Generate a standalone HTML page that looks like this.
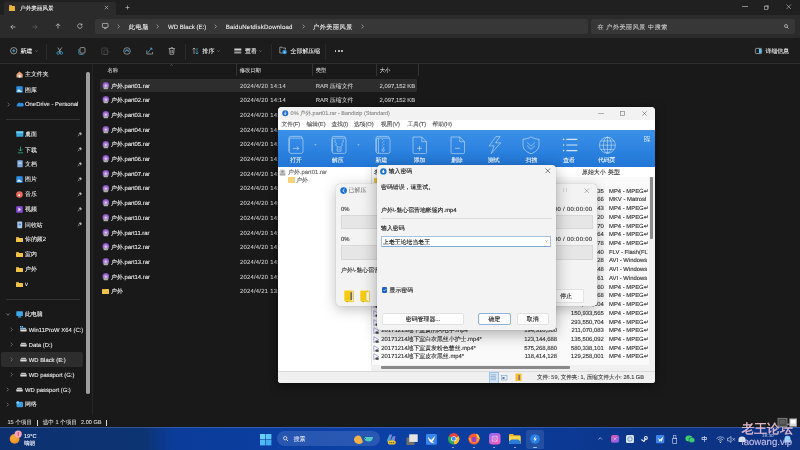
<!DOCTYPE html>
<html><head><meta charset="utf-8"><style>
html,body{margin:0;padding:0;width:800px;height:450px;overflow:hidden;background:#191919}
body{position:relative;font-family:"Liberation Sans",sans-serif;text-rendering:geometricPrecision}
.a{position:absolute}
.t{white-space:nowrap;-webkit-text-stroke-width:0.08px}
.l{-webkit-text-stroke-width:0.12px}
svg{overflow:visible}
</style></head><body>
<svg width="0" height="0" style="position:absolute"><defs><radialGradient id="rg" cx="0.5" cy="0.55" r="0.6"><stop offset="0" stop-color="#f4e8ff"/><stop offset="0.35" stop-color="#b48ae0"/><stop offset="1" stop-color="#6c3ea8"/></radialGradient><linearGradient id="pg" x1="0" y1="0" x2="1" y2="1"><stop offset="0" stop-color="#f05fb0"/><stop offset="1" stop-color="#6a5cf0"/></linearGradient></defs></svg>
<div class="a" style="left:0;top:0;width:800px;height:450px;will-change:transform;background:#191919">
<div class="a" style="left:0px;top:0px;width:800px;height:15px;background:#202020"></div>
<div class="a" style="left:4px;top:1.6px;width:111.6px;height:13.6px;background:#2b2b2b;border-radius:3px 3px 0 0"></div>
<div class="a" style="left:8.5px;top:5.5px;width:6.5px;height:5px;background:#e8b43c;border-radius:0.5px"></div>
<div class="a" style="left:8.5px;top:4.8px;width:3px;height:1.5px;background:#d9a232;border-radius:0.5px 0.5px 0 0"></div>
<div class="a t" style="left:20.1px;top:5.40px;line-height:8px;font-size:5.6px;color:#f6f6f6;">户外美丽风景</div>
<svg class="a" style="left:104px;top:5px" width="5" height="5" viewBox="0 0 5 5"><path d="M0.8 0.8L4.2 4.2M4.2 0.8L0.8 4.2" stroke="#cfcfcf" stroke-width="0.6"/></svg>
<svg class="a" style="left:124.5px;top:5px" width="5" height="5" viewBox="0 0 5 5"><path d="M2.5 0.5V4.5M0.5 2.5H4.5" stroke="#cfcfcf" stroke-width="0.6"/></svg>
<div class="a" style="left:742px;top:6.4px;width:5.8px;height:0.5px;background:#8a8a8a"></div>
<svg class="a" style="left:763.5px;top:4.5px" width="5" height="5" viewBox="0 0 5 5"><rect x="0.5" y="1.2" width="3.3" height="3.3" fill="none" stroke="#bdbdbd" stroke-width="0.6"/><path d="M1.3 0.6H4.4V3.8" fill="none" stroke="#bdbdbd" stroke-width="0.5"/></svg>
<svg class="a" style="left:786px;top:4.2px" width="5.5" height="5.5" viewBox="0 0 5.5 5.5"><path d="M0.5 0.5L5 5M5 0.5L0.5 5" stroke="#bdbdbd" stroke-width="0.6"/></svg>
<div class="a" style="left:0px;top:15px;width:800px;height:23px;background:#2b2b2b"></div>
<svg class="a" style="left:9.5px;top:23.5px" width="6" height="6" viewBox="0 0 6 6"><path d="M5.5 3H0.8M3 0.8L0.8 3L3 5.2" fill="none" stroke="#e6e6e6" stroke-width="0.6"/></svg>
<svg class="a" style="left:32px;top:23.5px" width="6" height="6" viewBox="0 0 6 6"><path d="M0.5 3H5.2M3 0.8L5.2 3L3 5.2" fill="none" stroke="#6e6e6e" stroke-width="0.6"/></svg>
<svg class="a" style="left:54.5px;top:23.3px" width="6" height="6" viewBox="0 0 6 6"><path d="M3 5.5V0.8M0.8 3L3 0.8L5.2 3" fill="none" stroke="#e6e6e6" stroke-width="0.6"/></svg>
<svg class="a" style="left:77px;top:23.3px" width="6" height="6" viewBox="0 0 6 6"><path d="M4.9 1.9A2.3 2.3 0 1 0 5.2 3.3M5 0.6V2.1H3.5" fill="none" stroke="#e6e6e6" stroke-width="0.6"/></svg>
<div class="a" style="left:94.5px;top:18.7px;width:493.5px;height:15px;background:#373737;border-radius:2.5px"></div>
<svg class="a" style="left:101.5px;top:23px" width="6.5" height="6" viewBox="0 0 6.5 6"><rect x="0.4" y="0.4" width="5.6" height="4" rx="0.4" fill="none" stroke="#e6e6e6" stroke-width="0.6"/><path d="M2 5.6H4.5" stroke="#e6e6e6" stroke-width="0.6"/></svg>
<svg class="a" style="left:116.5px;top:23.8px" width="3" height="5" viewBox="0 0 3 5"><path d="M0.8 0.6L2.4 2.5L0.8 4.4" fill="none" stroke="#d0d0d0" stroke-width="0.55"/></svg>
<div class="a t" style="left:128.7px;top:24.00px;line-height:8px;font-size:6.1px;color:#f0f0f0;letter-spacing:0.7px">此电脑</div>
<svg class="a" style="left:156.0px;top:23.8px" width="3" height="5" viewBox="0 0 3 5"><path d="M0.8 0.6L2.4 2.5L0.8 4.4" fill="none" stroke="#d0d0d0" stroke-width="0.55"/></svg>
<div class="a t" style="left:168px;top:24.00px;line-height:8px;font-size:6.1px;color:#f0f0f0;">WD Black (E:)</div>
<svg class="a" style="left:214.0px;top:23.8px" width="3" height="5" viewBox="0 0 3 5"><path d="M0.8 0.6L2.4 2.5L0.8 4.4" fill="none" stroke="#d0d0d0" stroke-width="0.55"/></svg>
<div class="a t" style="left:225.7px;top:24.00px;line-height:8px;font-size:6.1px;color:#f0f0f0;letter-spacing:0.2px">BaiduNetdiskDownload</div>
<svg class="a" style="left:301.5px;top:23.8px" width="3" height="5" viewBox="0 0 3 5"><path d="M0.8 0.6L2.4 2.5L0.8 4.4" fill="none" stroke="#d0d0d0" stroke-width="0.55"/></svg>
<div class="a t" style="left:313px;top:24.00px;line-height:8px;font-size:6.1px;color:#f0f0f0;letter-spacing:0.55px">户外美丽风景</div>
<svg class="a" style="left:361.0px;top:23.8px" width="3" height="5" viewBox="0 0 3 5"><path d="M0.8 0.6L2.4 2.5L0.8 4.4" fill="none" stroke="#d0d0d0" stroke-width="0.55"/></svg>
<div class="a" style="left:591.3px;top:18.7px;width:204px;height:15px;background:#373737;border-radius:2.5px"></div>
<div class="a t" style="left:597.5px;top:24.00px;line-height:8px;font-size:6.1px;color:#cfcfcf;letter-spacing:0.5px">在 户外美丽风景 中搜索</div>
<svg class="a" style="left:783.5px;top:23.8px" width="5" height="5" viewBox="0 0 5 5"><circle cx="2" cy="2" r="1.5" fill="none" stroke="#e0e0e0" stroke-width="0.6"/><path d="M3.1 3.1L4.5 4.5" stroke="#e0e0e0" stroke-width="0.7"/></svg>
<div class="a" style="left:0px;top:38px;width:800px;height:25px;background:#1c1c1c"></div>
<div class="a" style="left:0px;top:62.8px;width:800px;height:0.7px;background:#2e2e2e"></div>
<svg class="a" style="left:10px;top:46.8px" width="7.5" height="7.5" viewBox="0 0 7.5 7.5"><circle cx="3.75" cy="3.75" r="3.2" fill="none" stroke="#d8d8d8" stroke-width="0.6"/><path d="M3.75 2.2V5.3M2.2 3.75H5.3" stroke="#4cc2ff" stroke-width="0.7"/></svg>
<div class="a t" style="left:20.6px;top:47.60px;line-height:8px;font-size:5.9px;color:#f2f2f2;">新建</div>
<svg class="a" style="left:35.4px;top:49.6px" width="3" height="2" viewBox="0 0 3 2"><path d="M0.4 0.5L1.5 1.5L2.6 0.5" fill="none" stroke="#a0a0a0" stroke-width="0.5"/></svg>
<div class="a" style="left:46.2px;top:43.6px;width:0.6px;height:16.3px;background:#2a2a2a"></div>
<svg class="a" style="left:55.6px;top:46.5px" width="7.5" height="8" viewBox="0 0 7.5 8"><path d="M1.8 0.5L4.5 5M5.7 0.5L3 5" stroke="#d8d8d8" stroke-width="0.6"/><circle cx="2.2" cy="6" r="1.3" fill="none" stroke="#4cc2ff" stroke-width="0.6"/><circle cx="5.3" cy="6" r="1.3" fill="none" stroke="#4cc2ff" stroke-width="0.6"/></svg>
<svg class="a" style="left:78px;top:46.5px" width="7.6" height="8" viewBox="0 0 7.6 8"><rect x="2" y="0.6" width="5" height="5.5" rx="1" fill="none" stroke="#d8d8d8" stroke-width="0.6"/><path d="M0.8 2V6.2A1.2 1.2 0 0 0 2 7.4H5.5" fill="none" stroke="#4cc2ff" stroke-width="0.6"/></svg>
<svg class="a" style="left:100.6px;top:46.5px" width="7.5" height="8" viewBox="0 0 7.5 8"><rect x="0.8" y="1" width="5.5" height="6.5" rx="1" fill="none" stroke="#555" stroke-width="0.6"/><rect x="3" y="3" width="4" height="4.5" rx="0.6" fill="none" stroke="#555" stroke-width="0.6"/></svg>
<svg class="a" style="left:122.7px;top:46.5px" width="8" height="8" viewBox="0 0 8 8"><circle cx="4" cy="4" r="3.3" fill="none" stroke="#c8c8c8" stroke-width="0.6"/><path d="M2.3 5L3.3 2.6L4.1 4.2L4.9 2.6L5.8 5" fill="none" stroke="#4cc2ff" stroke-width="0.65"/></svg>
<svg class="a" style="left:145.6px;top:46.5px" width="7.5" height="8" viewBox="0 0 7.5 8"><path d="M0.8 3.5V7H6.6V5" fill="none" stroke="#c8c8c8" stroke-width="0.6"/><path d="M1.8 5.8L3.6 3.6L5.8 1.2M4 1.2H5.9V3" fill="none" stroke="#4cc2ff" stroke-width="0.65"/></svg>
<svg class="a" style="left:168px;top:46.5px" width="7.6" height="8" viewBox="0 0 7.6 8"><path d="M0.6 1.6H7M1.5 1.6L2 7.3H5.6L6.1 1.6M2.8 1.6L3.1 0.6H4.5L4.8 1.6M3 3V6M4.6 3V6" fill="none" stroke="#d8d8d8" stroke-width="0.6"/></svg>
<div class="a" style="left:184.7px;top:43.6px;width:0.6px;height:16.3px;background:#2a2a2a"></div>
<svg class="a" style="left:191.9px;top:46.5px" width="7" height="8" viewBox="0 0 7 8"><path d="M2 7V1M0.6 2.4L2 1L3.4 2.4" fill="none" stroke="#d8d8d8" stroke-width="0.6"/><path d="M5 1V7M3.6 5.6L5 7L6.4 5.6" fill="none" stroke="#4cc2ff" stroke-width="0.6"/></svg>
<div class="a t" style="left:202.5px;top:47.60px;line-height:8px;font-size:5.9px;color:#f2f2f2;">排序</div>
<svg class="a" style="left:217.3px;top:49.6px" width="3" height="2" viewBox="0 0 3 2"><path d="M0.4 0.5L1.5 1.5L2.6 0.5" fill="none" stroke="#a0a0a0" stroke-width="0.5"/></svg>
<svg class="a" style="left:233.7px;top:47.5px" width="7.5" height="6" viewBox="0 0 7.5 6"><rect x="0.3" y="0.5" width="7" height="2" fill="#cfcfcf"/><rect x="0.3" y="3.5" width="7" height="2" fill="#9a9a9a"/></svg>
<div class="a t" style="left:245px;top:47.60px;line-height:8px;font-size:5.9px;color:#f2f2f2;">查看</div>
<svg class="a" style="left:259.1px;top:49.6px" width="3" height="2" viewBox="0 0 3 2"><path d="M0.4 0.5L1.5 1.5L2.6 0.5" fill="none" stroke="#a0a0a0" stroke-width="0.5"/></svg>
<div class="a" style="left:270.5px;top:43.6px;width:0.6px;height:16.3px;background:#2a2a2a"></div>
<svg class="a" style="left:278.7px;top:46.3px" width="8.5" height="8.5" viewBox="0 0 8.5 8.5"><path d="M0.8 1.2H3L3.8 2H6.5V3.5M0.8 1.2V7H3.5" fill="none" stroke="#d8d8d8" stroke-width="0.6"/><circle cx="5.6" cy="6" r="2.3" fill="#2b8fd8"/><path d="M5.6 4.9V7M4.7 6.2L5.6 7.1L6.5 6.2" fill="none" stroke="#fff" stroke-width="0.45"/></svg>
<div class="a t" style="left:290.6px;top:47.60px;line-height:8px;font-size:5.9px;color:#f2f2f2;">全部解压缩</div>
<div class="a" style="left:325.2px;top:43.6px;width:0.6px;height:16.3px;background:#2a2a2a"></div>
<div class="a" style="left:334.6px;top:50px;width:1.5px;height:1.5px;background:#e0e0e0;border-radius:1px"></div>
<div class="a" style="left:338.0px;top:50px;width:1.5px;height:1.5px;background:#e0e0e0;border-radius:1px"></div>
<div class="a" style="left:341.40000000000003px;top:50px;width:1.5px;height:1.5px;background:#e0e0e0;border-radius:1px"></div>
<svg class="a" style="left:755px;top:47.5px" width="7" height="6" viewBox="0 0 7 6"><rect x="0.4" y="0.4" width="6.2" height="5.2" rx="1" fill="none" stroke="#d8d8d8" stroke-width="0.6"/><rect x="4" y="0.8" width="2.3" height="4.4" fill="#4cc2ff"/></svg>
<div class="a t" style="left:765.5px;top:47.60px;line-height:8px;font-size:5.9px;color:#f2f2f2;">详细信息</div>
<svg class="a" style="left:16px;top:71px" width="7.2" height="7" viewBox="0 0 7.2 7"><path d="M0.5 3.3L3.6 0.5L6.7 3.3V6.6H0.5Z" fill="#f0a37a"/><rect x="2.6" y="4" width="2" height="2.6" fill="#fff"/></svg>
<div class="a t" style="left:25px;top:71.40px;line-height:8px;font-size:5.9px;color:#efefef;">主文件夹</div>
<svg class="a" style="left:16px;top:86.3px" width="7" height="7" viewBox="0 0 7 7"><rect x="0.3" y="0.3" width="6.4" height="6.4" rx="0.6" fill="#2d8ee6"/><path d="M0.5 5.6L2.8 3.3L6.5 6Z" fill="#e8f4ff"/></svg>
<div class="a t" style="left:25px;top:86.60px;line-height:8px;font-size:5.9px;color:#efefef;">图库</div>
<svg class="a" style="left:6.5px;top:101.9px" width="3" height="5" viewBox="0 0 3 5"><path d="M0.8 0.6L2.4 2.5L0.8 4.4" fill="none" stroke="#9a9a9a" stroke-width="0.55"/></svg>
<svg class="a" style="left:15.5px;top:101.8px" width="8" height="5" viewBox="0 0 8 5"><path d="M1.5 4.6A1.3 1.3 0 0 1 1.4 2.2A2 2 0 0 1 4.8 1.2A1.6 1.6 0 0 1 6.8 4.6Z" fill="#2f8fe0"/></svg>
<div class="a t" style="left:25px;top:101.40px;line-height:8px;font-size:5.9px;color:#efefef;">OneDrive - Personal</div>
<div class="a" style="left:5.6px;top:119.3px;width:74.5px;height:0.6px;background:#333"></div>
<svg class="a" style="left:16.2px;top:131px" width="7.5" height="6" viewBox="0 0 7.5 6"><rect x="0.3" y="0.3" width="7" height="5.4" rx="0.5" fill="#38a8d8"/><rect x="0.3" y="0.3" width="7" height="2" fill="#6cc8ee"/></svg>
<div class="a t" style="left:25px;top:131.00px;line-height:8px;font-size:5.9px;color:#efefef;">桌面</div>
<svg class="a" style="left:77.0px;top:131.5px" width="5" height="5" viewBox="0 0 5 5"><path d="M0.6 4.4L2 3M1.3 1.9L3.1 3.7M2.1 1.2L3.8 2.9L4.5 1.6L3.4 0.5Z" fill="#bdbdbd" stroke="#bdbdbd" stroke-width="0.5"/></svg>
<svg class="a" style="left:16.5px;top:145.8px" width="7" height="7.5" viewBox="0 0 7 7.5"><path d="M3.5 0.5V5M1.6 3.2L3.5 5.1L5.4 3.2M0.8 6.8H6.2" fill="none" stroke="#3bc08a" stroke-width="0.7"/></svg>
<div class="a t" style="left:25px;top:146.50px;line-height:8px;font-size:5.9px;color:#efefef;">下载</div>
<svg class="a" style="left:77.0px;top:147.0px" width="5" height="5" viewBox="0 0 5 5"><path d="M0.6 4.4L2 3M1.3 1.9L3.1 3.7M2.1 1.2L3.8 2.9L4.5 1.6L3.4 0.5Z" fill="#bdbdbd" stroke="#bdbdbd" stroke-width="0.5"/></svg>
<svg class="a" style="left:16.8px;top:160.2px" width="6" height="7.5" viewBox="0 0 6 7.5"><rect x="0.3" y="0.3" width="5.4" height="6.9" rx="0.5" fill="#7fa6d8"/><rect x="1.2" y="2" width="3.4" height="0.5" fill="#e0ecff"/><rect x="1.2" y="3.5" width="3.4" height="0.5" fill="#e0ecff"/></svg>
<div class="a t" style="left:25px;top:161.00px;line-height:8px;font-size:5.9px;color:#efefef;">文档</div>
<svg class="a" style="left:77.0px;top:161.5px" width="5" height="5" viewBox="0 0 5 5"><path d="M0.6 4.4L2 3M1.3 1.9L3.1 3.7M2.1 1.2L3.8 2.9L4.5 1.6L3.4 0.5Z" fill="#bdbdbd" stroke="#bdbdbd" stroke-width="0.5"/></svg>
<svg class="a" style="left:16px;top:175.5px" width="7" height="7" viewBox="0 0 7 7"><rect x="0.3" y="0.3" width="6.4" height="6.4" rx="0.6" fill="#2d8ee6"/><path d="M0.5 5.6L2.8 3.3L6.5 6Z" fill="#e8f4ff"/></svg>
<div class="a t" style="left:25px;top:176.00px;line-height:8px;font-size:5.9px;color:#efefef;">图片</div>
<svg class="a" style="left:77.0px;top:176.5px" width="5" height="5" viewBox="0 0 5 5"><path d="M0.6 4.4L2 3M1.3 1.9L3.1 3.7M2.1 1.2L3.8 2.9L4.5 1.6L3.4 0.5Z" fill="#bdbdbd" stroke="#bdbdbd" stroke-width="0.5"/></svg>
<svg class="a" style="left:16px;top:190.5px" width="7" height="7" viewBox="0 0 7 7"><circle cx="3.5" cy="3.5" r="3.3" fill="#e8675a"/><circle cx="3.2" cy="4.2" r="1" fill="#fff"/></svg>
<div class="a t" style="left:25px;top:191.00px;line-height:8px;font-size:5.9px;color:#efefef;">音乐</div>
<svg class="a" style="left:77.0px;top:191.5px" width="5" height="5" viewBox="0 0 5 5"><path d="M0.6 4.4L2 3M1.3 1.9L3.1 3.7M2.1 1.2L3.8 2.9L4.5 1.6L3.4 0.5Z" fill="#bdbdbd" stroke="#bdbdbd" stroke-width="0.5"/></svg>
<svg class="a" style="left:16.2px;top:205.5px" width="7" height="7" viewBox="0 0 7 7"><rect x="0.3" y="0.3" width="6.4" height="6.4" rx="0.6" fill="#8a4fd8"/><path d="M2.5 1.8L5 3.5L2.5 5.2Z" fill="#fff"/></svg>
<div class="a t" style="left:25px;top:206.00px;line-height:8px;font-size:5.9px;color:#efefef;">视频</div>
<svg class="a" style="left:77.0px;top:206.5px" width="5" height="5" viewBox="0 0 5 5"><path d="M0.6 4.4L2 3M1.3 1.9L3.1 3.7M2.1 1.2L3.8 2.9L4.5 1.6L3.4 0.5Z" fill="#bdbdbd" stroke="#bdbdbd" stroke-width="0.5"/></svg>
<svg class="a" style="left:17px;top:221px" width="5.5" height="7.5" viewBox="0 0 5.5 7.5"><rect x="0.3" y="0.6" width="4.9" height="6.6" rx="0.6" fill="#a9c6e6"/><circle cx="2.75" cy="3.5" r="1.1" fill="#3f7fd0"/></svg>
<div class="a t" style="left:25px;top:221.80px;line-height:8px;font-size:5.9px;color:#efefef;">回收站</div>
<svg class="a" style="left:77.0px;top:222.3px" width="5" height="5" viewBox="0 0 5 5"><path d="M0.6 4.4L2 3M1.3 1.9L3.1 3.7M2.1 1.2L3.8 2.9L4.5 1.6L3.4 0.5Z" fill="#bdbdbd" stroke="#bdbdbd" stroke-width="0.5"/></svg>
<div class="a" style="left:16px;top:237.55px;width:7px;height:4.6px;background:#f0c34a;border-radius:0.6px"></div>
<div class="a" style="left:16px;top:236.65px;width:3.15px;height:1.5px;background:#dca93a;border-radius:0.5px 0.5px 0 0"></div>
<div class="a t" style="left:25px;top:236.40px;line-height:8px;font-size:5.9px;color:#efefef;">你的频2</div>
<div class="a" style="left:16px;top:252.55px;width:7px;height:4.6px;background:#f0c34a;border-radius:0.6px"></div>
<div class="a" style="left:16px;top:251.65px;width:3.15px;height:1.5px;background:#dca93a;border-radius:0.5px 0.5px 0 0"></div>
<div class="a t" style="left:25px;top:251.40px;line-height:8px;font-size:5.9px;color:#efefef;">室内</div>
<div class="a" style="left:16px;top:267.54999999999995px;width:7px;height:4.6px;background:#f0c34a;border-radius:0.6px"></div>
<div class="a" style="left:16px;top:266.65px;width:3.15px;height:1.5px;background:#dca93a;border-radius:0.5px 0.5px 0 0"></div>
<div class="a t" style="left:25px;top:266.40px;line-height:8px;font-size:5.9px;color:#efefef;">户外</div>
<div class="a" style="left:16px;top:282.54999999999995px;width:7px;height:4.6px;background:#f0c34a;border-radius:0.6px"></div>
<div class="a" style="left:16px;top:281.65px;width:3.15px;height:1.5px;background:#dca93a;border-radius:0.5px 0.5px 0 0"></div>
<div class="a t" style="left:25px;top:281.40px;line-height:8px;font-size:5.9px;color:#efefef;">v</div>
<div class="a" style="left:5.6px;top:299.1px;width:74.5px;height:0.6px;background:#333"></div>
<svg class="a" style="left:5.8px;top:313px" width="4" height="3" viewBox="0 0 4 3"><path d="M0.3 0.6L2 2.2L3.7 0.6" fill="none" stroke="#b8b8b8" stroke-width="0.6"/></svg>
<svg class="a" style="left:16px;top:310.8px" width="7.2" height="7" viewBox="0 0 7.2 7"><rect x="0.3" y="0.3" width="6.6" height="4.8" rx="0.6" fill="#3fa7e8"/><path d="M2.2 5.2H5L5.5 6.6H1.7Z" fill="#3fa7e8"/></svg>
<div class="a t" style="left:25px;top:311.40px;line-height:8px;font-size:5.9px;color:#efefef;">此电脑</div>
<svg class="a" style="left:10.4px;top:327.2px" width="3" height="5" viewBox="0 0 3 5"><path d="M0.8 0.6L2.4 2.5L0.8 4.4" fill="none" stroke="#9a9a9a" stroke-width="0.55"/></svg>
<svg class="a" style="left:20px;top:327.2px" width="7" height="5" viewBox="0 0 7 5"><path d="M0.4 2.4L1.4 0.7H5.6L6.6 2.4Z" fill="#bfbfbf"/><rect x="0.3" y="2.2" width="6.4" height="2.4" rx="0.6" fill="#dcdcdc"/><rect x="0.6" y="2" width="5.8" height="0.45" fill="#5a5a5a"/></svg>
<svg class="a" style="left:20px;top:326.2px" width="3.2" height="3.2" viewBox="0 0 3.2 3.2"><rect x="0" y="0" width="1.4" height="1.4" fill="#4fb4f0"/><rect x="1.7" y="0" width="1.4" height="1.4" fill="#4fb4f0"/><rect x="0" y="1.7" width="1.4" height="1.4" fill="#4fb4f0"/><rect x="1.7" y="1.7" width="1.4" height="1.4" fill="#4fb4f0"/></svg>
<div class="a t" style="left:28.7px;top:326.70px;line-height:8px;font-size:5.9px;color:#efefef;">Win11ProW X64 (C:)</div>
<svg class="a" style="left:10.4px;top:342.0px" width="3" height="5" viewBox="0 0 3 5"><path d="M0.8 0.6L2.4 2.5L0.8 4.4" fill="none" stroke="#9a9a9a" stroke-width="0.55"/></svg>
<svg class="a" style="left:20px;top:342.0px" width="7" height="5" viewBox="0 0 7 5"><path d="M0.4 2.4L1.4 0.7H5.6L6.6 2.4Z" fill="#bfbfbf"/><rect x="0.3" y="2.2" width="6.4" height="2.4" rx="0.6" fill="#dcdcdc"/><rect x="0.6" y="2" width="5.8" height="0.45" fill="#5a5a5a"/></svg>
<div class="a t" style="left:28.7px;top:341.50px;line-height:8px;font-size:5.9px;color:#efefef;">Data (D:)</div>
<div class="a" style="left:1.3px;top:352px;width:81.7px;height:14.6px;background:#2d2d2d;border-radius:2px"></div>
<svg class="a" style="left:10.4px;top:357.0px" width="3" height="5" viewBox="0 0 3 5"><path d="M0.8 0.6L2.4 2.5L0.8 4.4" fill="none" stroke="#9a9a9a" stroke-width="0.55"/></svg>
<svg class="a" style="left:20px;top:357.0px" width="7" height="5" viewBox="0 0 7 5"><path d="M0.4 2.4L1.4 0.7H5.6L6.6 2.4Z" fill="#bfbfbf"/><rect x="0.3" y="2.2" width="6.4" height="2.4" rx="0.6" fill="#dcdcdc"/><rect x="0.6" y="2" width="5.8" height="0.45" fill="#5a5a5a"/></svg>
<div class="a t" style="left:28.7px;top:356.50px;line-height:8px;font-size:5.9px;color:#efefef;">WD Black (E:)</div>
<svg class="a" style="left:10.4px;top:372.0px" width="3" height="5" viewBox="0 0 3 5"><path d="M0.8 0.6L2.4 2.5L0.8 4.4" fill="none" stroke="#9a9a9a" stroke-width="0.55"/></svg>
<svg class="a" style="left:20px;top:372.0px" width="7" height="5" viewBox="0 0 7 5"><path d="M0.4 2.4L1.4 0.7H5.6L6.6 2.4Z" fill="#bfbfbf"/><rect x="0.3" y="2.2" width="6.4" height="2.4" rx="0.6" fill="#dcdcdc"/><rect x="0.6" y="2" width="5.8" height="0.45" fill="#5a5a5a"/></svg>
<div class="a t" style="left:28.7px;top:371.50px;line-height:8px;font-size:5.9px;color:#efefef;">WD passport (G:)</div>
<svg class="a" style="left:6.3px;top:387.0px" width="3" height="5" viewBox="0 0 3 5"><path d="M0.8 0.6L2.4 2.5L0.8 4.4" fill="none" stroke="#9a9a9a" stroke-width="0.55"/></svg>
<svg class="a" style="left:16.3px;top:387.0px" width="7" height="5" viewBox="0 0 7 5"><path d="M0.4 2.4L1.4 0.7H5.6L6.6 2.4Z" fill="#bfbfbf"/><rect x="0.3" y="2.2" width="6.4" height="2.4" rx="0.6" fill="#dcdcdc"/><rect x="0.6" y="2" width="5.8" height="0.45" fill="#5a5a5a"/></svg>
<div class="a t" style="left:25px;top:386.50px;line-height:8px;font-size:5.9px;color:#efefef;">WD passport (G:)</div>
<svg class="a" style="left:6.3px;top:401.9px" width="3" height="5" viewBox="0 0 3 5"><path d="M0.8 0.6L2.4 2.5L0.8 4.4" fill="none" stroke="#9a9a9a" stroke-width="0.55"/></svg>
<svg class="a" style="left:16px;top:400.8px" width="7.5" height="7" viewBox="0 0 7.5 7"><rect x="0.5" y="0.8" width="6.5" height="5.5" rx="1.2" fill="#3aa0e0"/><circle cx="1.8" cy="1.6" r="1.4" fill="#7fd0ff"/></svg>
<div class="a t" style="left:25px;top:401.40px;line-height:8px;font-size:5.9px;color:#efefef;">网络</div>
<div class="a" style="left:86.3px;top:72px;width:3.4px;height:322px;background:#9e9e9e;border-radius:1.7px"></div>
<div class="a" style="left:92.4px;top:64px;width:0.6px;height:351px;background:#262626"></div>
<div class="a t" style="left:107.5px;top:67.40px;line-height:8px;font-size:5.3px;color:#cfcfcf;">名称</div>
<svg class="a" style="left:169.5px;top:63.8px" width="3" height="2" viewBox="0 0 3 2"><path d="M0.4 1.6L1.5 0.5L2.6 1.6" fill="none" stroke="#9a9a9a" stroke-width="0.45"/></svg>
<div class="a" style="left:236.4px;top:63.5px;width:0.6px;height:12.3px;background:#333"></div>
<div class="a" style="left:312.3px;top:63.5px;width:0.6px;height:12.3px;background:#333"></div>
<div class="a" style="left:376.4px;top:63.5px;width:0.6px;height:12.3px;background:#333"></div>
<div class="a" style="left:418.4px;top:63.5px;width:0.6px;height:12.3px;background:#333"></div>
<div class="a t" style="left:239.7px;top:67.40px;line-height:8px;font-size:5.3px;color:#cfcfcf;">修改日期</div>
<div class="a t" style="left:315.8px;top:67.40px;line-height:8px;font-size:5.3px;color:#cfcfcf;">类型</div>
<div class="a t" style="left:379.7px;top:67.40px;line-height:8px;font-size:5.3px;color:#cfcfcf;">大小</div>
<div class="a" style="left:100px;top:79.2px;width:316.5px;height:12.6px;background:#2d2d2d;border-radius:2px"></div>
<svg class="a" style="left:101.9px;top:81.8px" width="7.6" height="7.6" viewBox="0 0 7.6 7.6"><circle cx="3.8" cy="3.4" r="3.3" fill="url(#rg)"/><rect x="1.5" y="5" width="4.6" height="2.2" rx="0.4" fill="#8e8e8e"/><path d="M2 5.8H5.6M2 6.6H5.6" stroke="#e8e8e8" stroke-width="0.35"/></svg>
<div class="a t" style="left:111px;top:82.60px;line-height:8px;font-size:5.9px;color:#f0f0f0;">户外.part01.rar</div>
<div class="a t" style="left:239.9px;top:82.60px;line-height:8px;font-size:5.9px;color:#cdcdcd;letter-spacing:0.24px">2024/4/20 14:14</div>
<div class="a t" style="left:315.8px;top:82.60px;line-height:8px;font-size:5.9px;color:#d0d0d0;">RAR 压缩文件</div>
<div class="a t" style="right:384.8px;top:82.60px;line-height:8px;font-size:5.9px;color:#d0d0d0;text-align:right;">2,097,152 KB</div>
<svg class="a" style="left:101.9px;top:96.49px" width="7.6" height="7.6" viewBox="0 0 7.6 7.6"><circle cx="3.8" cy="3.4" r="3.3" fill="url(#rg)"/><rect x="1.5" y="5" width="4.6" height="2.2" rx="0.4" fill="#8e8e8e"/><path d="M2 5.8H5.6M2 6.6H5.6" stroke="#e8e8e8" stroke-width="0.35"/></svg>
<div class="a t" style="left:111px;top:97.29px;line-height:8px;font-size:5.9px;color:#f0f0f0;">户外.part02.rar</div>
<div class="a t" style="left:239.9px;top:97.29px;line-height:8px;font-size:5.9px;color:#cdcdcd;letter-spacing:0.24px">2024/4/20 14:14</div>
<div class="a t" style="left:315.8px;top:97.29px;line-height:8px;font-size:5.9px;color:#d0d0d0;">RAR 压缩文件</div>
<div class="a t" style="right:384.8px;top:97.29px;line-height:8px;font-size:5.9px;color:#d0d0d0;text-align:right;">2,097,152 KB</div>
<svg class="a" style="left:101.9px;top:111.17999999999999px" width="7.6" height="7.6" viewBox="0 0 7.6 7.6"><circle cx="3.8" cy="3.4" r="3.3" fill="url(#rg)"/><rect x="1.5" y="5" width="4.6" height="2.2" rx="0.4" fill="#8e8e8e"/><path d="M2 5.8H5.6M2 6.6H5.6" stroke="#e8e8e8" stroke-width="0.35"/></svg>
<div class="a t" style="left:111px;top:111.98px;line-height:8px;font-size:5.9px;color:#f0f0f0;">户外.part03.rar</div>
<div class="a t" style="left:239.9px;top:111.98px;line-height:8px;font-size:5.9px;color:#cdcdcd;letter-spacing:0.24px">2024/4/20 14:14</div>
<svg class="a" style="left:101.9px;top:125.86999999999999px" width="7.6" height="7.6" viewBox="0 0 7.6 7.6"><circle cx="3.8" cy="3.4" r="3.3" fill="url(#rg)"/><rect x="1.5" y="5" width="4.6" height="2.2" rx="0.4" fill="#8e8e8e"/><path d="M2 5.8H5.6M2 6.6H5.6" stroke="#e8e8e8" stroke-width="0.35"/></svg>
<div class="a t" style="left:111px;top:126.67px;line-height:8px;font-size:5.9px;color:#f0f0f0;">户外.part04.rar</div>
<div class="a t" style="left:239.9px;top:126.67px;line-height:8px;font-size:5.9px;color:#cdcdcd;letter-spacing:0.24px">2024/4/20 14:14</div>
<svg class="a" style="left:101.9px;top:140.55999999999997px" width="7.6" height="7.6" viewBox="0 0 7.6 7.6"><circle cx="3.8" cy="3.4" r="3.3" fill="url(#rg)"/><rect x="1.5" y="5" width="4.6" height="2.2" rx="0.4" fill="#8e8e8e"/><path d="M2 5.8H5.6M2 6.6H5.6" stroke="#e8e8e8" stroke-width="0.35"/></svg>
<div class="a t" style="left:111px;top:141.36px;line-height:8px;font-size:5.9px;color:#f0f0f0;">户外.part05.rar</div>
<div class="a t" style="left:239.9px;top:141.36px;line-height:8px;font-size:5.9px;color:#cdcdcd;letter-spacing:0.24px">2024/4/20 14:14</div>
<svg class="a" style="left:101.9px;top:155.25px" width="7.6" height="7.6" viewBox="0 0 7.6 7.6"><circle cx="3.8" cy="3.4" r="3.3" fill="url(#rg)"/><rect x="1.5" y="5" width="4.6" height="2.2" rx="0.4" fill="#8e8e8e"/><path d="M2 5.8H5.6M2 6.6H5.6" stroke="#e8e8e8" stroke-width="0.35"/></svg>
<div class="a t" style="left:111px;top:156.05px;line-height:8px;font-size:5.9px;color:#f0f0f0;">户外.part06.rar</div>
<div class="a t" style="left:239.9px;top:156.05px;line-height:8px;font-size:5.9px;color:#cdcdcd;letter-spacing:0.24px">2024/4/20 14:14</div>
<svg class="a" style="left:101.9px;top:169.94px" width="7.6" height="7.6" viewBox="0 0 7.6 7.6"><circle cx="3.8" cy="3.4" r="3.3" fill="url(#rg)"/><rect x="1.5" y="5" width="4.6" height="2.2" rx="0.4" fill="#8e8e8e"/><path d="M2 5.8H5.6M2 6.6H5.6" stroke="#e8e8e8" stroke-width="0.35"/></svg>
<div class="a t" style="left:111px;top:170.74px;line-height:8px;font-size:5.9px;color:#f0f0f0;">户外.part07.rar</div>
<div class="a t" style="left:239.9px;top:170.74px;line-height:8px;font-size:5.9px;color:#cdcdcd;letter-spacing:0.24px">2024/4/20 14:14</div>
<svg class="a" style="left:101.9px;top:184.63px" width="7.6" height="7.6" viewBox="0 0 7.6 7.6"><circle cx="3.8" cy="3.4" r="3.3" fill="url(#rg)"/><rect x="1.5" y="5" width="4.6" height="2.2" rx="0.4" fill="#8e8e8e"/><path d="M2 5.8H5.6M2 6.6H5.6" stroke="#e8e8e8" stroke-width="0.35"/></svg>
<div class="a t" style="left:111px;top:185.43px;line-height:8px;font-size:5.9px;color:#f0f0f0;">户外.part08.rar</div>
<div class="a t" style="left:239.9px;top:185.43px;line-height:8px;font-size:5.9px;color:#cdcdcd;letter-spacing:0.24px">2024/4/20 14:14</div>
<svg class="a" style="left:101.9px;top:199.32px" width="7.6" height="7.6" viewBox="0 0 7.6 7.6"><circle cx="3.8" cy="3.4" r="3.3" fill="url(#rg)"/><rect x="1.5" y="5" width="4.6" height="2.2" rx="0.4" fill="#8e8e8e"/><path d="M2 5.8H5.6M2 6.6H5.6" stroke="#e8e8e8" stroke-width="0.35"/></svg>
<div class="a t" style="left:111px;top:200.12px;line-height:8px;font-size:5.9px;color:#f0f0f0;">户外.part09.rar</div>
<div class="a t" style="left:239.9px;top:200.12px;line-height:8px;font-size:5.9px;color:#cdcdcd;letter-spacing:0.24px">2024/4/20 14:14</div>
<svg class="a" style="left:101.9px;top:214.01px" width="7.6" height="7.6" viewBox="0 0 7.6 7.6"><circle cx="3.8" cy="3.4" r="3.3" fill="url(#rg)"/><rect x="1.5" y="5" width="4.6" height="2.2" rx="0.4" fill="#8e8e8e"/><path d="M2 5.8H5.6M2 6.6H5.6" stroke="#e8e8e8" stroke-width="0.35"/></svg>
<div class="a t" style="left:111px;top:214.81px;line-height:8px;font-size:5.9px;color:#f0f0f0;">户外.part10.rar</div>
<div class="a t" style="left:239.9px;top:214.81px;line-height:8px;font-size:5.9px;color:#cdcdcd;letter-spacing:0.24px">2024/4/20 14:14</div>
<svg class="a" style="left:101.9px;top:228.7px" width="7.6" height="7.6" viewBox="0 0 7.6 7.6"><circle cx="3.8" cy="3.4" r="3.3" fill="url(#rg)"/><rect x="1.5" y="5" width="4.6" height="2.2" rx="0.4" fill="#8e8e8e"/><path d="M2 5.8H5.6M2 6.6H5.6" stroke="#e8e8e8" stroke-width="0.35"/></svg>
<div class="a t" style="left:111px;top:229.50px;line-height:8px;font-size:5.9px;color:#f0f0f0;">户外.part11.rar</div>
<div class="a t" style="left:239.9px;top:229.50px;line-height:8px;font-size:5.9px;color:#cdcdcd;letter-spacing:0.24px">2024/4/20 14:14</div>
<svg class="a" style="left:101.9px;top:243.39px" width="7.6" height="7.6" viewBox="0 0 7.6 7.6"><circle cx="3.8" cy="3.4" r="3.3" fill="url(#rg)"/><rect x="1.5" y="5" width="4.6" height="2.2" rx="0.4" fill="#8e8e8e"/><path d="M2 5.8H5.6M2 6.6H5.6" stroke="#e8e8e8" stroke-width="0.35"/></svg>
<div class="a t" style="left:111px;top:244.19px;line-height:8px;font-size:5.9px;color:#f0f0f0;">户外.part12.rar</div>
<div class="a t" style="left:239.9px;top:244.19px;line-height:8px;font-size:5.9px;color:#cdcdcd;letter-spacing:0.24px">2024/4/20 14:14</div>
<svg class="a" style="left:101.9px;top:258.08px" width="7.6" height="7.6" viewBox="0 0 7.6 7.6"><circle cx="3.8" cy="3.4" r="3.3" fill="url(#rg)"/><rect x="1.5" y="5" width="4.6" height="2.2" rx="0.4" fill="#8e8e8e"/><path d="M2 5.8H5.6M2 6.6H5.6" stroke="#e8e8e8" stroke-width="0.35"/></svg>
<div class="a t" style="left:111px;top:258.88px;line-height:8px;font-size:5.9px;color:#f0f0f0;">户外.part13.rar</div>
<div class="a t" style="left:239.9px;top:258.88px;line-height:8px;font-size:5.9px;color:#cdcdcd;letter-spacing:0.24px">2024/4/20 14:14</div>
<svg class="a" style="left:101.9px;top:272.77px" width="7.6" height="7.6" viewBox="0 0 7.6 7.6"><circle cx="3.8" cy="3.4" r="3.3" fill="url(#rg)"/><rect x="1.5" y="5" width="4.6" height="2.2" rx="0.4" fill="#8e8e8e"/><path d="M2 5.8H5.6M2 6.6H5.6" stroke="#e8e8e8" stroke-width="0.35"/></svg>
<div class="a t" style="left:111px;top:273.57px;line-height:8px;font-size:5.9px;color:#f0f0f0;">户外.part14.rar</div>
<div class="a t" style="left:239.9px;top:273.57px;line-height:8px;font-size:5.9px;color:#cdcdcd;letter-spacing:0.24px">2024/4/20 14:14</div>
<div class="a" style="left:102px;top:289.40999999999997px;width:7px;height:4.6px;background:#f0c34a;border-radius:0.6px"></div>
<div class="a" style="left:102px;top:288.51px;width:3.15px;height:1.5px;background:#dca93a;border-radius:0.5px 0.5px 0 0"></div>
<div class="a t" style="left:111px;top:288.26px;line-height:8px;font-size:5.9px;color:#f0f0f0;">户外</div>
<div class="a t" style="left:239.9px;top:288.26px;line-height:8px;font-size:5.9px;color:#cdcdcd;letter-spacing:0.24px">2024/4/21 13:30</div>
<div class="a t" style="left:7.5px;top:419.30px;line-height:8px;font-size:5.6px;color:#d8d8d8;">15 个项目</div>
<div class="a" style="left:36.9px;top:420px;width:0.6px;height:5.5px;background:#d8d8d8"></div>
<div class="a t" style="left:42.7px;top:419.30px;line-height:8px;font-size:5.6px;color:#d8d8d8;">选中 1 个项目</div>
<div class="a t" style="left:81px;top:419.30px;line-height:8px;font-size:5.6px;color:#d8d8d8;">2.00 GB</div>
<div class="a" style="left:106.1px;top:420px;width:0.6px;height:5.5px;background:#d8d8d8"></div>
<div class="a" style="left:0px;top:427.3px;width:800px;height:22.7px;background:linear-gradient(90deg,#0d3170 0%,#0d3472 18%,#0b3c9a 21.5%,#0b40a5 45%,#0b3d9e 62%,#0c3588 80%,#0e3180 100%)"></div>
<div class="a" style="left:0px;top:427.3px;width:800px;height:0.7px;background:rgba(90,120,190,0.5)"></div>
<svg class="a" style="left:9px;top:430px" width="14" height="15" viewBox="0 0 14 15"><circle cx="5.6" cy="8.9" r="4.9" fill="#f0922a"/><circle cx="5" cy="8.2" r="3.5" fill="#f6ac3c" opacity="0.7"/><circle cx="9.2" cy="4.1" r="3.6" fill="#f4a6bc"/><path d="M9.2 2.2V5.8" stroke="#c4233c" stroke-width="0.8"/></svg>
<div class="a t" style="left:24px;top:432.50px;line-height:8px;font-size:5.6px;color:#eef2fb;">19°C</div>
<div class="a t" style="left:24px;top:439.50px;line-height:8px;font-size:5.6px;color:#eef2fb;">晴朗</div>
<svg class="a" style="left:259.5px;top:433.7px" width="11.4" height="11.4" viewBox="0 0 11.4 11.4"><rect x="0" y="0" width="5.4" height="5.4" fill="#6ad0ff"/><rect x="6" y="0" width="5.4" height="5.4" fill="#5cc4fb"/><rect x="0" y="6" width="5.4" height="5.4" fill="#52b8f6"/><rect x="6" y="6" width="5.4" height="5.4" fill="#45aef2"/></svg>
<div class="a" style="left:277px;top:431px;width:102.5px;height:15px;background:rgba(120,150,220,0.28);border-radius:7.5px"></div>
<svg class="a" style="left:282.5px;top:436px" width="5.5" height="5.5" viewBox="0 0 5.5 5.5"><circle cx="2.2" cy="2.2" r="1.7" fill="none" stroke="#fff" stroke-width="0.7"/><path d="M3.4 3.4L5 5" stroke="#fff" stroke-width="0.8"/></svg>
<div class="a t" style="left:293.7px;top:435.60px;line-height:8px;font-size:5.9px;color:#dfe6f7;">搜索</div>
<svg class="a" style="left:353px;top:433.5px" width="22" height="10" viewBox="0 0 22 10"><path d="M1 5A4 4 0 0 1 8 3L10 8A5 5 0 0 1 1 5Z" fill="#f2b248"/><path d="M11 3H20A4.5 4.5 0 0 1 11 3Z" fill="#4fc9c0"/><path d="M10 2L13 5" stroke="#1b4f9a" stroke-width="0.8"/></svg>
<svg class="a" style="left:385.8px;top:434px" width="11" height="11" viewBox="0 0 11 11"><defs><linearGradient id="cg" x1="0" y1="0" x2="1" y2="0.3"><stop offset="0" stop-color="#f0c030"/><stop offset="0.3" stop-color="#40c070"/><stop offset="0.55" stop-color="#3aa0f0"/><stop offset="1" stop-color="#e050c0"/></linearGradient></defs><path d="M0.6 7.4L3.4 0.6H6.2L4 7.4Z" fill="url(#cg)"/><path d="M4.6 7.4L6.8 2.2H9.6L8.4 7.4Z" fill="url(#cg)"/><rect x="1.8" y="6.6" width="8" height="4" rx="1.8" fill="#f2c438"/><rect x="3.4" y="8.2" width="1" height="1" fill="#3a3020"/><rect x="5.3" y="8.2" width="1" height="1" fill="#3a3020"/><rect x="7.2" y="8.2" width="1" height="1" fill="#3a3020"/></svg>
<svg class="a" style="left:405.5px;top:433.5px" width="12" height="11.5" viewBox="0 0 12 11.5"><rect x="0.5" y="3.5" width="8" height="7.5" fill="#6f6f6a"/><rect x="3.2" y="0.3" width="8.5" height="7.6" fill="#e4e4e4"/></svg>
<svg class="a" style="left:426.40000000000003px;top:433.6px" width="10.8" height="10.8" viewBox="0 0 10.8 10.8"><rect x="0" y="0" width="10.8" height="10.8" rx="1.2" fill="#3b86ee"/><path d="M1.8 2.6C3.2 4.8 4.4 5.6 5.4 5.7L8.9 2C8.5 4.6 7.6 6.4 6.4 7.4L8.2 9.2C6.4 9 5.2 8.6 4.4 8C3 7 2.2 5.2 1.8 2.6Z" fill="#fff"/></svg>
<svg class="a" style="left:447.5px;top:433px" width="11.5" height="11.5" viewBox="0 0 11.5 11.5"><path d="M5.75 5.75L0.77 2.875A5.75 5.75 0 0 1 10.73 2.875Z" fill="#e8453c"/><path d="M5.75 5.75L10.73 2.875A5.75 5.75 0 0 1 5.75 11.5Z" fill="#f9bb2d"/><path d="M5.75 5.75L5.75 11.5A5.75 5.75 0 0 1 0.77 2.875Z" fill="#34a853"/><circle cx="5.75" cy="5.75" r="2.6" fill="#fff"/><circle cx="5.75" cy="5.75" r="2" fill="#4285f4"/></svg>
<svg class="a" style="left:467.5px;top:433px" width="12" height="11.5" viewBox="0 0 12 11.5"><circle cx="6" cy="6" r="5.6" fill="#ff5a36"/><path d="M0.6 5A5.6 5.6 0 0 0 11.4 6A5.5 5.5 0 0 0 8.5 1C9.6 3 9 5 7.6 5.5Z" fill="#ff9a2e"/><circle cx="6" cy="6.4" r="2.6" fill="#9a3fc8"/><path d="M8 0.5C10.5 1.5 11.6 3.6 11.6 6L9 4Z" fill="#ffd23a"/></svg>
<svg class="a" style="left:488.5px;top:433px" width="11.5" height="11.5" viewBox="0 0 11.5 11.5"><defs><linearGradient id="pg2" x1="0" y1="0" x2="0.6" y2="1"><stop offset="0" stop-color="#8a6cf6"/><stop offset="1" stop-color="#f05cc0"/></linearGradient></defs><rect x="0" y="0" width="11.5" height="11.5" rx="3" fill="url(#pg2)"/><path d="M3.3 3.3H8.2V8.2H3.3Z" fill="none" stroke="#fff" stroke-opacity="0.8" stroke-width="0.6"/><path d="M3.3 3.3L8.2 8.2M8.2 3.3L3.3 8.2" stroke="#fff" stroke-opacity="0.6" stroke-width="0.5"/></svg>
<svg class="a" style="left:509px;top:434px" width="11.5" height="10" viewBox="0 0 11.5 10"><path d="M0 0.8A0.8 0.8 0 0 1 0.8 0H4L5 1.2H10.7A0.8 0.8 0 0 1 11.5 2V9.2A0.8 0.8 0 0 1 10.7 10H0.8A0.8 0.8 0 0 1 0 9.2Z" fill="#f0b429"/><rect x="0" y="2.2" width="11.5" height="7.8" rx="0.8" fill="#ffd54a"/><path d="M0 9.2V7.2L2.5 5.6H9L11.5 7.2V9.2A0.8 0.8 0 0 1 10.7 10H0.8A0.8 0.8 0 0 1 0 9.2Z" fill="#2b7bd6"/></svg>
<div class="a" style="left:526.4px;top:430px;width:18px;height:18.6px;background:rgba(255,255,255,0.1);border-radius:2.5px"></div>
<svg class="a" style="left:530.4px;top:434px" width="10" height="10" viewBox="0 0 10 10"><circle cx="5" cy="5" r="4.8" fill="#2a7fe6"/><path d="M5.8 1.8L3.3 5.4H5L4.2 8.2L6.8 4.6H5.1Z" fill="#fff"/></svg>
<div class="a" style="left:452.2px;top:446.8px;width:2px;height:1px;background:#9fb0d0;border-radius:1px"></div>
<div class="a" style="left:472.5px;top:446.8px;width:2px;height:1px;background:#9fb0d0;border-radius:1px"></div>
<div class="a" style="left:493.2px;top:446.8px;width:2px;height:1px;background:#9fb0d0;border-radius:1px"></div>
<div class="a" style="left:513.7px;top:446.8px;width:2px;height:1px;background:#9fb0d0;border-radius:1px"></div>
<div class="a" style="left:533.4px;top:446.5px;width:4px;height:1.1px;background:#8fc8ff;border-radius:1px"></div>
<svg class="a" style="left:597.5px;top:437px" width="4.5" height="3" viewBox="0 0 4.5 3"><path d="M0.5 2.5L2.25 0.6L4 2.5" fill="none" stroke="#e8eefc" stroke-width="0.6"/></svg>
<svg class="a" style="left:610.6px;top:435.2px" width="8.2" height="7.8" viewBox="0 0 8.2 7.8"><rect x="0" y="0" width="8.2" height="7.8" rx="2.6" fill="url(#pg)"/><path d="M2.6 2.4L5.6 5.4M5.6 2.4L2.6 5.4" stroke="#fff" stroke-opacity="0.7" stroke-width="0.6"/></svg>
<svg class="a" style="left:626px;top:435px" width="8" height="8" viewBox="0 0 8 8"><rect x="0" y="0" width="8" height="8" rx="1.5" fill="#d9e4f5"/><circle cx="4" cy="4" r="2.2" fill="none" stroke="#3573c0" stroke-width="0.7"/></svg>
<svg class="a" style="left:640.9px;top:435.2px" width="7.4" height="7.6" viewBox="0 0 7.4 7.6"><circle cx="4.9" cy="2.9" r="2" fill="#e8eefc"/><circle cx="4.9" cy="2.9" r="0.9" fill="#0e3588"/><path d="M0.3 4.6L3 6.4L4.6 3.6" fill="none" stroke="#e8eefc" stroke-width="1.2"/></svg>
<svg class="a" style="left:656px;top:435px" width="8.3" height="8.3" viewBox="0 0 8.3 8.3"><rect x="0" y="0" width="8.3" height="8.3" rx="1" fill="#3b82ea"/><path d="M1.3 2C2.3 3.6 3.4 4.4 4.2 4.6C5.2 3.6 6.1 2.5 7.2 1.4C6.7 3.4 6.3 5 5.6 6.7L4.2 5.8L2.8 6.9L3.3 5.3C2.5 4.4 1.8 3.3 1.3 2Z" fill="#fff"/></svg>
<svg class="a" style="left:671.5px;top:434.5px" width="5.5" height="9" viewBox="0 0 5.5 9"><rect x="0.7" y="3.2" width="4" height="5.3" fill="none" stroke="#d8e2f5" stroke-width="0.6"/><rect x="1.5" y="0.6" width="2.4" height="2.6" fill="none" stroke="#d8e2f5" stroke-width="0.5"/></svg>
<svg class="a" style="left:684.5px;top:435px" width="10" height="8" viewBox="0 0 10 8"><ellipse cx="4" cy="3.5" rx="3.6" ry="3" fill="#3fd16a"/><ellipse cx="6.8" cy="5" rx="3" ry="2.6" fill="#3fd16a" stroke="#0e3590" stroke-width="0.5"/></svg>
<div class="a t" style="left:674.40px;top:436.00px;width:60px;line-height:8px;font-size:6px;color:#e8eefc;text-align:center;">中</div>
<svg class="a" style="left:715.5px;top:435.5px" width="9" height="7" viewBox="0 0 9 7"><path d="M0.5 2.6A5.5 5.5 0 0 1 8.5 2.6M1.8 4A3.7 3.7 0 0 1 7.2 4M3.1 5.3A2 2 0 0 1 5.9 5.3" fill="none" stroke="#e8eefc" stroke-width="0.6"/><circle cx="4.5" cy="6.3" r="0.6" fill="#e8eefc"/></svg>
<svg class="a" style="left:727px;top:435.5px" width="9" height="7" viewBox="0 0 9 7"><path d="M0.5 2.2H2L4 0.5V6.5L2 4.8H0.5Z" fill="none" stroke="#e8eefc" stroke-width="0.6"/><path d="M5.5 2.2L7.8 4.6M7.8 2.2L5.5 4.6" stroke="#e8eefc" stroke-width="0.6"/></svg>
<svg class="a" style="left:738px;top:435.5px" width="8" height="7" viewBox="0 0 8 7"><path d="M0.5 3.5A3.5 3 0 0 1 7.5 3.5V6H0.5Z" fill="#d8e2f5"/></svg>
<div class="a t" style="left:762px;top:432.00px;line-height:8px;font-size:4.6px;color:#9fb2d8;">19:30</div>
<svg class="a" style="left:782.5px;top:434.5px" width="9" height="9" viewBox="0 0 9 9"><path d="M4.5 0.8A3 3 0 0 1 7.5 3.8V6.5L8.5 7.5H0.5L1.5 6.5V3.8A3 3 0 0 1 4.5 0.8Z" fill="#8fd4f8"/></svg>
<div class="a t" style="left:741.5px;top:422.30px;line-height:14px;font-size:12.8px;color:rgba(236,196,214,0.9);-webkit-text-stroke-width:0.35px">老王论坛</div>
<div class="a t" style="left:741.5px;top:437.80px;line-height:10px;font-size:9.6px;color:rgba(205,200,240,0.9);-webkit-text-stroke-width:0.15px">laowang.vip</div>
<svg class="a" style="left:764px;top:417.5px" width="33" height="9" viewBox="0 0 33 9"><rect x="14" y="0.3" width="9" height="8.4" fill="#4a4a4a" stroke="#8a8a8a" stroke-width="0.8"/><path d="M15.8 3H21.2M15.8 5H21.2" stroke="#9a9a9a" stroke-width="0.5"/><rect x="25.7" y="0.8" width="7" height="7.6" fill="#d8d8d8" stroke="#9a9a9a" stroke-width="0.6"/><rect x="26.8" y="2" width="4.8" height="3.5" fill="#fff"/></svg>
<div class="a" style="left:278px;top:107px;width:377px;height:276.3px;background:#fff;border-radius:4px 4px 3px 3px;box-shadow:0 2px 10px rgba(0,0,0,0.55);overflow:hidden">
<div class="a" style="left:0px;top:0px;width:377px;height:12.5px;background:#f2f2f2"></div>
<div class="a" style="left:0px;top:12.5px;width:377px;height:10.4px;background:#fff"></div>
<svg class="a" style="left:3.5px;top:3px" width="6.5" height="6.5" viewBox="0 0 6.5 6.5"><circle cx="3.25" cy="3.25" r="3" fill="#1f6fd0"/><path d="M3.25 1.5V4.5M2 3.4L3.25 4.6L4.5 3.4" fill="none" stroke="#fff" stroke-width="0.7"/></svg>
<div class="a t l" style="left:12.600000000000023px;top:2.80px;line-height:8px;font-size:5.5px;color:#8a8a8a;">0% 户外.part01.rar - Bandizip (Standard)</div>
<div class="a" style="left:320px;top:6.299999999999997px;width:6.2px;height:0.5px;background:#b0b0b0"></div>
<svg class="a" style="left:341.5px;top:4px" width="5" height="5" viewBox="0 0 5 5"><rect x="0.4" y="0.4" width="4.2" height="4.2" fill="none" stroke="#888" stroke-width="0.7"/></svg>
<svg class="a" style="left:363.5px;top:4px" width="5" height="5" viewBox="0 0 5 5"><path d="M0.4 0.4L4.6 4.6M4.6 0.4L0.4 4.6" stroke="#555" stroke-width="0.55"/></svg>
<div class="a t l" style="left:3.6000000000000227px;top:14.10px;line-height:8px;font-size:5.7px;color:#555;">文件(F)</div>
<div class="a t l" style="left:28.600000000000023px;top:14.10px;line-height:8px;font-size:5.7px;color:#555;">编辑(E)</div>
<div class="a t l" style="left:53.5px;top:14.10px;line-height:8px;font-size:5.7px;color:#555;">查找(I)</div>
<div class="a t l" style="left:76px;top:14.10px;line-height:8px;font-size:5.7px;color:#555;">选项(O)</div>
<div class="a t l" style="left:103px;top:14.10px;line-height:8px;font-size:5.7px;color:#555;">视图(V)</div>
<div class="a t l" style="left:129.5px;top:14.10px;line-height:8px;font-size:5.7px;color:#555;">工具(T)</div>
<div class="a t l" style="left:154.5px;top:14.10px;line-height:8px;font-size:5.7px;color:#555;">帮助(H)</div>
<div class="a" style="left:0px;top:22.900000000000006px;width:377px;height:36.9px;background:linear-gradient(180deg,#3b91e8 0%,#2c82df 55%,#2276d6 100%)"></div>
<svg class="a" style="left:9.199999999999989px;top:29px" width="17" height="18.5" viewBox="0 0 17 18.5"><path d="M2 15.5V2.2A1.8 1.8 0 0 1 3.8 0.4H13.5A1.8 1.8 0 0 1 15.3 2.2" fill="none" stroke="rgba(255,255,255,0.8)" stroke-width="0.55"/><rect x="2.2" y="2.1" width="13.8" height="15.3" rx="1.8" fill="none" stroke="rgba(255,255,255,0.8)" stroke-width="0.55"/><path d="M5.8 12.4H11.8M9.8 10.4L11.8 12.4L9.8 14.4" fill="none" stroke="rgba(255,255,255,0.8)" stroke-width="0.6"/></svg>
<svg class="a" style="left:51.80000000000001px;top:29px" width="17" height="18.5" viewBox="0 0 17 18.5"><path d="M2 15.5V2.2A1.8 1.8 0 0 1 3.8 0.4H13.5A1.8 1.8 0 0 1 15.3 2.2" fill="none" stroke="rgba(255,255,255,0.8)" stroke-width="0.55"/><rect x="2.2" y="2.1" width="13.8" height="15.3" rx="1.8" fill="none" stroke="rgba(255,255,255,0.8)" stroke-width="0.55"/><path d="M5 3.5V6.2L6.6 7.6L5.6 9.2L8 11L9.1 11.2L10.2 11L12.6 9.2L11.6 7.6L13.2 6.2V3.5M7.2 11V15.2H11V11M8.3 13.3H9.9" fill="none" stroke="rgba(255,255,255,0.8)" stroke-width="0.55"/></svg>
<svg class="a" style="left:96px;top:29px" width="17" height="18.5" viewBox="0 0 17 18.5"><path d="M2 15.5V2.2A1.8 1.8 0 0 1 3.8 0.4H13.5A1.8 1.8 0 0 1 15.3 2.2" fill="none" stroke="rgba(255,255,255,0.8)" stroke-width="0.55"/><rect x="2.2" y="2.1" width="13.8" height="15.3" rx="1.8" fill="none" stroke="rgba(255,255,255,0.8)" stroke-width="0.55"/><path d="M4.5 2.3V17.2" stroke="rgba(255,255,255,0.8)" stroke-width="0.55"/><path d="M8.6 3V4M9.8 4.6V5.6M8.6 6.2V7.2M9.8 7.8V8.8M8.6 9.4V10.4M9.8 11V12" stroke="rgba(255,255,255,0.8)" stroke-width="0.6"/><ellipse cx="9.2" cy="14" rx="1" ry="1.5" fill="none" stroke="rgba(255,255,255,0.8)" stroke-width="0.55"/></svg>
<svg class="a" style="left:36.30000000000001px;top:36.80000000000001px" width="3" height="2" viewBox="0 0 3 2"><path d="M0.3 0.4H2.7L1.5 1.5Z" fill="rgba(255,255,255,0.8)"/></svg>
<svg class="a" style="left:79.19999999999999px;top:36.80000000000001px" width="3" height="2" viewBox="0 0 3 2"><path d="M0.3 0.4H2.7L1.5 1.5Z" fill="rgba(255,255,255,0.8)"/></svg>
<svg class="a" style="left:134.2px;top:29px" width="17" height="18.5" viewBox="0 0 17 18.5"><path d="M1 1H9.8L14.5 5.7V16.4A1.2 1.2 0 0 1 13.3 17.6H2.2A1.2 1.2 0 0 1 1 16.4Z" fill="none" stroke="rgba(255,255,255,0.8)" stroke-width="0.55"/><path d="M9.8 1V5.7H14.5" fill="none" stroke="rgba(255,255,255,0.8)" stroke-width="0.55"/><path d="M7.6 9.8V14.8M5.1 12.3H10.1" stroke="rgba(255,255,255,0.8)" stroke-width="0.6"/></svg>
<svg class="a" style="left:171.8px;top:29px" width="17" height="18.5" viewBox="0 0 17 18.5"><path d="M1 1H9.8L14.5 5.7V16.4A1.2 1.2 0 0 1 13.3 17.6H2.2A1.2 1.2 0 0 1 1 16.4Z" fill="none" stroke="rgba(255,255,255,0.8)" stroke-width="0.55"/><path d="M9.8 1V5.7H14.5" fill="none" stroke="rgba(255,255,255,0.8)" stroke-width="0.55"/><path d="M5.1 12.3H10.1" stroke="rgba(255,255,255,0.8)" stroke-width="0.6"/></svg>
<svg class="a" style="left:209.8px;top:29px" width="14" height="18.5" viewBox="0 0 14 18.5"><path d="M7.8 0.6L1.2 9.8H6.2L3.2 17.6L12.6 6.8H7.6L12 0.6Z" fill="none" stroke="rgba(255,255,255,0.8)" stroke-width="0.55"/></svg>
<svg class="a" style="left:244.29999999999995px;top:29px" width="18" height="18.5" viewBox="0 0 18 18.5"><path d="M9 0.8C11 2.3 14 3.2 17 3.2V9.2C17 13 13.5 16.2 9 17.8C4.5 16.2 1 13 1 9.2V3.2C4 3.2 7 2.3 9 0.8Z" fill="none" stroke="rgba(255,255,255,0.8)" stroke-width="0.6"/><path d="M5.2 6.6L9 10.2L12.8 6.6M5.2 9.8L9 13.4L12.8 9.8" fill="none" stroke="rgba(255,255,255,0.8)" stroke-width="0.6"/></svg>
<svg class="a" style="left:283.79999999999995px;top:29px" width="17" height="18.5" viewBox="0 0 17 18.5"><circle cx="1.6" cy="3.4" r="0.8" fill="rgba(255,255,255,0.8)"/><circle cx="1.6" cy="9" r="0.8" fill="rgba(255,255,255,0.8)"/><circle cx="1.6" cy="14.6" r="0.8" fill="rgba(255,255,255,0.8)"/><path d="M4.8 3.4H15M4.8 9H15M4.8 14.6H15" stroke="rgba(255,255,255,0.8)" stroke-width="1.1" stroke-linecap="round"/></svg>
<svg class="a" style="left:320.70000000000005px;top:29px" width="17" height="18.5" viewBox="0 0 17 18.5"><circle cx="8.4" cy="9.2" r="8" fill="none" stroke="rgba(255,255,255,0.8)" stroke-width="0.55"/><ellipse cx="8.4" cy="9.2" rx="4" ry="8" fill="none" stroke="rgba(255,255,255,0.8)" stroke-width="0.55"/><path d="M8.4 1.2V17.2M0.4 9.2H16.4M1.6 5H15.2M1.6 13.4H15.2" stroke="rgba(255,255,255,0.8)" stroke-width="0.55"/></svg>
<div class="a t" style="left:-2.00px;top:50.00px;width:40px;line-height:8px;font-size:5.8px;color:#fff;text-align:center;">打开</div>
<div class="a t" style="left:39.70px;top:50.00px;width:40px;line-height:8px;font-size:5.8px;color:#fff;text-align:center;">解压</div>
<div class="a t" style="left:83.40px;top:50.00px;width:40px;line-height:8px;font-size:5.8px;color:#fff;text-align:center;">新建</div>
<div class="a t" style="left:121.50px;top:50.00px;width:40px;line-height:8px;font-size:5.8px;color:#fff;text-align:center;">添加</div>
<div class="a t" style="left:159.00px;top:50.00px;width:40px;line-height:8px;font-size:5.8px;color:#fff;text-align:center;">删除</div>
<div class="a t" style="left:195.70px;top:50.00px;width:40px;line-height:8px;font-size:5.8px;color:#fff;text-align:center;">测试</div>
<div class="a t" style="left:233.50px;top:50.00px;width:40px;line-height:8px;font-size:5.8px;color:#fff;text-align:center;">扫描</div>
<div class="a t" style="left:271.00px;top:50.00px;width:40px;line-height:8px;font-size:5.8px;color:#fff;text-align:center;">查看</div>
<div class="a t" style="left:308.70px;top:50.00px;width:40px;line-height:8px;font-size:5.8px;color:#fff;text-align:center;">代码页</div>
<svg class="a" style="left:366px;top:28.5px" width="6" height="6.5" viewBox="0 0 6 6.5"><rect x="0.5" y="0.5" width="2" height="2" fill="none" stroke="rgba(255,255,255,0.8)" stroke-width="0.5"/><rect x="3.5" y="0.5" width="2" height="2" fill="none" stroke="rgba(255,255,255,0.8)" stroke-width="0.5"/><rect x="0.5" y="3.5" width="2" height="2" fill="none" stroke="rgba(255,255,255,0.8)" stroke-width="0.5"/><rect x="3.5" y="3.5" width="2" height="2" fill="rgba(255,255,255,0.8)"/></svg>
<div class="a" style="left:0px;top:59.80000000000001px;width:93px;height:204.2px;background:#fff"></div>
<div class="a" style="left:93px;top:59.80000000000001px;width:284px;height:204.2px;background:#fafafa"></div>
<div class="a" style="left:93px;top:59.80000000000001px;width:284px;height:10.5px;background:#fff"></div>
<div class="a" style="left:92.60000000000002px;top:59.80000000000001px;width:0.6px;height:204.2px;background:#e3e3e3"></div>
<svg class="a" style="left:1px;top:61.80000000000001px" width="7" height="7" viewBox="0 0 7 7"><circle cx="3.5" cy="3.3" r="3.1" fill="#cfcfcf"/><circle cx="3.5" cy="2.6" r="1.2" fill="#8f8f8f"/><rect x="0.6" y="4.4" width="5.8" height="2.2" rx="0.5" fill="#a8a8a8"/></svg>
<div class="a t l" style="left:10.100000000000023px;top:61.70px;line-height:8px;font-size:5.9px;color:#666;">户外.part01.rar</div>
<div class="a" style="left:10px;top:69.80000000000001px;width:6.5px;height:5.9px;background:#f6d37a;border-radius:0.5px"></div>
<div class="a t l" style="left:18.19999999999999px;top:69.50px;line-height:8px;font-size:5.9px;color:#666;">户外</div>
<div class="a t l" style="left:95.80000000000001px;top:62.30px;line-height:8px;font-size:5.9px;color:#333;">名称</div>
<div class="a t l" style="left:304px;top:62.30px;line-height:8px;font-size:5.9px;color:#333;">原始大小</div>
<div class="a t l" style="left:330px;top:62.30px;line-height:8px;font-size:5.9px;color:#333;">类型</div>
<div class="a" style="left:370.5px;top:70.30000000000001px;width:6.5px;height:193.7px;background:#f0f0f0"></div>
<div class="a" style="left:371.79999999999995px;top:69.5px;width:3.3px;height:62px;background:#8a8a8a;border-radius:1px"></div>
<div class="a t l" style="left:331px;top:80.70px;line-height:8px;font-size:5.9px;color:#333;white-space:nowrap;width:39px;overflow:hidden">MP4 - MPEG↵</div>
<div class="a t l" style="right:51.200000000000045px;top:80.70px;line-height:8px;font-size:5.9px;color:#333;text-align:right;">111,111,135</div>
<svg class="a" style="left:95px;top:80.80000000000001px" width="7" height="7.2" viewBox="0 0 7 7.2"><path d="M0.8 0.6L5.8 3.6L0.8 6.6Z" fill="none" stroke="#6f6fd0" stroke-width="0.55"/><rect x="2.6" y="4.6" width="3" height="2.2" fill="#444"/></svg>
<div class="a t l" style="left:331px;top:89.42px;line-height:8px;font-size:5.9px;color:#333;white-space:nowrap;width:39px;overflow:hidden">MKV - Matrosl</div>
<div class="a t l" style="right:51.200000000000045px;top:89.42px;line-height:8px;font-size:5.9px;color:#333;text-align:right;">1,111,166</div>
<svg class="a" style="left:95px;top:89.52000000000001px" width="7" height="7.2" viewBox="0 0 7 7.2"><path d="M0.8 0.6L5.8 3.6L0.8 6.6Z" fill="none" stroke="#6f6fd0" stroke-width="0.55"/><rect x="2.6" y="4.6" width="3" height="2.2" fill="#444"/></svg>
<div class="a t l" style="left:331px;top:98.14px;line-height:8px;font-size:5.9px;color:#333;white-space:nowrap;width:39px;overflow:hidden">MP4 - MPEG↵</div>
<div class="a t l" style="right:51.200000000000045px;top:98.14px;line-height:8px;font-size:5.9px;color:#333;text-align:right;">1,111,143</div>
<svg class="a" style="left:95px;top:98.24000000000001px" width="7" height="7.2" viewBox="0 0 7 7.2"><path d="M0.8 0.6L5.8 3.6L0.8 6.6Z" fill="none" stroke="#6f6fd0" stroke-width="0.55"/><rect x="2.6" y="4.6" width="3" height="2.2" fill="#444"/></svg>
<div class="a t l" style="left:331px;top:106.86px;line-height:8px;font-size:5.9px;color:#333;white-space:nowrap;width:39px;overflow:hidden">MP4 - MPEG↵</div>
<div class="a t l" style="right:51.200000000000045px;top:106.86px;line-height:8px;font-size:5.9px;color:#333;text-align:right;">1,111,120</div>
<svg class="a" style="left:95px;top:106.96000000000001px" width="7" height="7.2" viewBox="0 0 7 7.2"><path d="M0.8 0.6L5.8 3.6L0.8 6.6Z" fill="none" stroke="#6f6fd0" stroke-width="0.55"/><rect x="2.6" y="4.6" width="3" height="2.2" fill="#444"/></svg>
<div class="a t l" style="left:331px;top:115.58px;line-height:8px;font-size:5.9px;color:#333;white-space:nowrap;width:39px;overflow:hidden">MP4 - MPEG↵</div>
<div class="a t l" style="right:51.200000000000045px;top:115.58px;line-height:8px;font-size:5.9px;color:#333;text-align:right;">1,111,170</div>
<svg class="a" style="left:95px;top:115.68px" width="7" height="7.2" viewBox="0 0 7 7.2"><path d="M0.8 0.6L5.8 3.6L0.8 6.6Z" fill="none" stroke="#6f6fd0" stroke-width="0.55"/><rect x="2.6" y="4.6" width="3" height="2.2" fill="#444"/></svg>
<div class="a t l" style="left:331px;top:124.30px;line-height:8px;font-size:5.9px;color:#333;white-space:nowrap;width:39px;overflow:hidden">MP4 - MPEG↵</div>
<div class="a t l" style="right:51.200000000000045px;top:124.30px;line-height:8px;font-size:5.9px;color:#333;text-align:right;">1,111,164</div>
<svg class="a" style="left:95px;top:124.4px" width="7" height="7.2" viewBox="0 0 7 7.2"><path d="M0.8 0.6L5.8 3.6L0.8 6.6Z" fill="none" stroke="#6f6fd0" stroke-width="0.55"/><rect x="2.6" y="4.6" width="3" height="2.2" fill="#444"/></svg>
<div class="a t l" style="left:331px;top:133.02px;line-height:8px;font-size:5.9px;color:#333;white-space:nowrap;width:39px;overflow:hidden">MP4 - MPEG↵</div>
<div class="a t l" style="right:51.200000000000045px;top:133.02px;line-height:8px;font-size:5.9px;color:#333;text-align:right;">1,111,178</div>
<svg class="a" style="left:95px;top:133.12000000000003px" width="7" height="7.2" viewBox="0 0 7 7.2"><path d="M0.8 0.6L5.8 3.6L0.8 6.6Z" fill="none" stroke="#6f6fd0" stroke-width="0.55"/><rect x="2.6" y="4.6" width="3" height="2.2" fill="#444"/></svg>
<div class="a t l" style="left:331px;top:141.74px;line-height:8px;font-size:5.9px;color:#333;white-space:nowrap;width:39px;overflow:hidden">FLV - Flash(FL\</div>
<div class="a t l" style="right:51.200000000000045px;top:141.74px;line-height:8px;font-size:5.9px;color:#333;text-align:right;">1,111,140</div>
<svg class="a" style="left:95px;top:141.84px" width="7" height="7.2" viewBox="0 0 7 7.2"><path d="M0.8 0.6L5.8 3.6L0.8 6.6Z" fill="none" stroke="#6f6fd0" stroke-width="0.55"/><rect x="2.6" y="4.6" width="3" height="2.2" fill="#444"/></svg>
<div class="a t l" style="left:331px;top:150.46px;line-height:8px;font-size:5.9px;color:#333;white-space:nowrap;width:39px;overflow:hidden">AVI - Windows</div>
<div class="a t l" style="right:51.200000000000045px;top:150.46px;line-height:8px;font-size:5.9px;color:#333;text-align:right;">1,111,128</div>
<svg class="a" style="left:95px;top:150.56px" width="7" height="7.2" viewBox="0 0 7 7.2"><path d="M0.8 0.6L5.8 3.6L0.8 6.6Z" fill="none" stroke="#6f6fd0" stroke-width="0.55"/><rect x="2.6" y="4.6" width="3" height="2.2" fill="#444"/></svg>
<div class="a t l" style="left:331px;top:159.18px;line-height:8px;font-size:5.9px;color:#333;white-space:nowrap;width:39px;overflow:hidden">AVI - Windows</div>
<div class="a t l" style="right:51.200000000000045px;top:159.18px;line-height:8px;font-size:5.9px;color:#333;text-align:right;">1,111,148</div>
<svg class="a" style="left:95px;top:159.27999999999997px" width="7" height="7.2" viewBox="0 0 7 7.2"><path d="M0.8 0.6L5.8 3.6L0.8 6.6Z" fill="none" stroke="#6f6fd0" stroke-width="0.55"/><rect x="2.6" y="4.6" width="3" height="2.2" fill="#444"/></svg>
<div class="a t l" style="left:331px;top:167.90px;line-height:8px;font-size:5.9px;color:#333;white-space:nowrap;width:39px;overflow:hidden">AVI - Windows</div>
<div class="a t l" style="right:51.200000000000045px;top:167.90px;line-height:8px;font-size:5.9px;color:#333;text-align:right;">1,111,161</div>
<svg class="a" style="left:95px;top:168.0px" width="7" height="7.2" viewBox="0 0 7 7.2"><path d="M0.8 0.6L5.8 3.6L0.8 6.6Z" fill="none" stroke="#6f6fd0" stroke-width="0.55"/><rect x="2.6" y="4.6" width="3" height="2.2" fill="#444"/></svg>
<div class="a t l" style="left:331px;top:176.62px;line-height:8px;font-size:5.9px;color:#333;white-space:nowrap;width:39px;overflow:hidden">MP4 - MPEG↵</div>
<div class="a t l" style="right:51.200000000000045px;top:176.62px;line-height:8px;font-size:5.9px;color:#333;text-align:right;">1,111,160</div>
<svg class="a" style="left:95px;top:176.71999999999997px" width="7" height="7.2" viewBox="0 0 7 7.2"><path d="M0.8 0.6L5.8 3.6L0.8 6.6Z" fill="none" stroke="#6f6fd0" stroke-width="0.55"/><rect x="2.6" y="4.6" width="3" height="2.2" fill="#444"/></svg>
<div class="a t l" style="left:331px;top:185.34px;line-height:8px;font-size:5.9px;color:#333;white-space:nowrap;width:39px;overflow:hidden">MP4 - MPEG↵</div>
<div class="a t l" style="right:51.200000000000045px;top:185.34px;line-height:8px;font-size:5.9px;color:#333;text-align:right;">1,111,168</div>
<svg class="a" style="left:95px;top:185.44px" width="7" height="7.2" viewBox="0 0 7 7.2"><path d="M0.8 0.6L5.8 3.6L0.8 6.6Z" fill="none" stroke="#6f6fd0" stroke-width="0.55"/><rect x="2.6" y="4.6" width="3" height="2.2" fill="#444"/></svg>
<div class="a t l" style="left:331px;top:194.06px;line-height:8px;font-size:5.9px;color:#333;white-space:nowrap;width:39px;overflow:hidden">MP4 - MPEG↵</div>
<div class="a t l" style="right:51.200000000000045px;top:194.06px;line-height:8px;font-size:5.9px;color:#333;text-align:right;">1,111,104</div>
<svg class="a" style="left:95px;top:194.15999999999997px" width="7" height="7.2" viewBox="0 0 7 7.2"><path d="M0.8 0.6L5.8 3.6L0.8 6.6Z" fill="none" stroke="#6f6fd0" stroke-width="0.55"/><rect x="2.6" y="4.6" width="3" height="2.2" fill="#444"/></svg>
<div class="a t l" style="left:331px;top:202.78px;line-height:8px;font-size:5.9px;color:#333;white-space:nowrap;width:39px;overflow:hidden">MP4 - MPEG↵</div>
<div class="a t l" style="right:51.200000000000045px;top:202.78px;line-height:8px;font-size:5.9px;color:#333;text-align:right;">150,933,565</div>
<svg class="a" style="left:95px;top:202.88px" width="7" height="7.2" viewBox="0 0 7 7.2"><path d="M0.8 0.6L5.8 3.6L0.8 6.6Z" fill="none" stroke="#6f6fd0" stroke-width="0.55"/><rect x="2.6" y="4.6" width="3" height="2.2" fill="#444"/></svg>
<div class="a t l" style="left:331px;top:211.50px;line-height:8px;font-size:5.9px;color:#333;white-space:nowrap;width:39px;overflow:hidden">MP4 - MPEG↵</div>
<div class="a t l" style="right:51.200000000000045px;top:211.50px;line-height:8px;font-size:5.9px;color:#333;text-align:right;">293,550,704</div>
<svg class="a" style="left:95px;top:211.60000000000002px" width="7" height="7.2" viewBox="0 0 7 7.2"><path d="M0.8 0.6L5.8 3.6L0.8 6.6Z" fill="none" stroke="#6f6fd0" stroke-width="0.55"/><rect x="2.6" y="4.6" width="3" height="2.2" fill="#444"/></svg>
<div class="a t l" style="left:331px;top:220.22px;line-height:8px;font-size:5.9px;color:#333;white-space:nowrap;width:39px;overflow:hidden">MP4 - MPEG↵</div>
<div class="a t l" style="right:51.200000000000045px;top:220.22px;line-height:8px;font-size:5.9px;color:#333;text-align:right;">211,070,083</div>
<div class="a t l" style="right:98px;top:220.22px;line-height:8px;font-size:5.9px;color:#333;text-align:right;">194,310,560</div>
<svg class="a" style="left:95px;top:220.32px" width="7" height="7.2" viewBox="0 0 7 7.2"><path d="M0.8 0.6L5.8 3.6L0.8 6.6Z" fill="none" stroke="#6f6fd0" stroke-width="0.55"/><rect x="2.6" y="4.6" width="3" height="2.2" fill="#444"/></svg>
<div class="a t l" style="left:103.30000000000001px;top:220.22px;line-height:8px;font-size:5.9px;color:#333;">20171213地下室黄的闪电手.mp4*</div>
<div class="a t l" style="left:331px;top:228.94px;line-height:8px;font-size:5.9px;color:#333;white-space:nowrap;width:39px;overflow:hidden">MP4 - MPEG↵</div>
<div class="a t l" style="right:51.200000000000045px;top:228.94px;line-height:8px;font-size:5.9px;color:#333;text-align:right;">135,506,092</div>
<div class="a t l" style="right:98px;top:228.94px;line-height:8px;font-size:5.9px;color:#333;text-align:right;">123,144,688</div>
<svg class="a" style="left:95px;top:229.03999999999996px" width="7" height="7.2" viewBox="0 0 7 7.2"><path d="M0.8 0.6L5.8 3.6L0.8 6.6Z" fill="none" stroke="#6f6fd0" stroke-width="0.55"/><rect x="2.6" y="4.6" width="3" height="2.2" fill="#444"/></svg>
<div class="a t l" style="left:103.30000000000001px;top:228.94px;line-height:8px;font-size:5.9px;color:#333;">20171214地下室白衣黑丝小护士.mp4*</div>
<div class="a t l" style="left:331px;top:237.66px;line-height:8px;font-size:5.9px;color:#333;white-space:nowrap;width:39px;overflow:hidden">MP4 - MPEG↵</div>
<div class="a t l" style="right:51.200000000000045px;top:237.66px;line-height:8px;font-size:5.9px;color:#333;text-align:right;">580,338,101</div>
<div class="a t l" style="right:98px;top:237.66px;line-height:8px;font-size:5.9px;color:#333;text-align:right;">575,268,880</div>
<svg class="a" style="left:95px;top:237.76px" width="7" height="7.2" viewBox="0 0 7 7.2"><path d="M0.8 0.6L5.8 3.6L0.8 6.6Z" fill="none" stroke="#6f6fd0" stroke-width="0.55"/><rect x="2.6" y="4.6" width="3" height="2.2" fill="#444"/></svg>
<div class="a t l" style="left:103.30000000000001px;top:237.66px;line-height:8px;font-size:5.9px;color:#333;">20171214地下室黄发粉色蕾丝.mp4*</div>
<div class="a t l" style="left:331px;top:246.38px;line-height:8px;font-size:5.9px;color:#333;white-space:nowrap;width:39px;overflow:hidden">MP4 - MPEG↵</div>
<div class="a t l" style="right:51.200000000000045px;top:246.38px;line-height:8px;font-size:5.9px;color:#333;text-align:right;">129,258,001</div>
<div class="a t l" style="right:98px;top:246.38px;line-height:8px;font-size:5.9px;color:#333;text-align:right;">118,414,128</div>
<svg class="a" style="left:95px;top:246.48000000000002px" width="7" height="7.2" viewBox="0 0 7 7.2"><path d="M0.8 0.6L5.8 3.6L0.8 6.6Z" fill="none" stroke="#6f6fd0" stroke-width="0.55"/><rect x="2.6" y="4.6" width="3" height="2.2" fill="#444"/></svg>
<div class="a t l" style="left:103.30000000000001px;top:246.38px;line-height:8px;font-size:5.9px;color:#333;">20171214地下室皮衣黑丝.mp4*</div>
<div class="a" style="left:95.5px;top:71.19999999999999px;width:6.5px;height:5px;background:#f2c94c;border-radius:0.5px"></div>
<div class="a" style="left:93px;top:257.5px;width:277.5px;height:6.5px;background:#f0f0f0"></div>
<div class="a" style="left:102.69999999999999px;top:258.5px;width:189.3px;height:3px;background:#8a8a8a;border-radius:1px"></div>
<div class="a" style="left:0px;top:264px;width:377px;height:13px;background:#f0f0f0"></div>
<div class="a" style="left:0px;top:264px;width:377px;height:0.6px;background:#dadada"></div>
<div class="a" style="left:210.5px;top:265.3px;width:8.5px;height:9.5px;background:#cfe4f8;border:0.5px solid #9cc4ec"></div>
<svg class="a" style="left:211.5px;top:266.8px" width="6.5" height="6.5" viewBox="0 0 6.5 6.5"><path d="M0.5 0.8H6M0.5 2.4H6M0.5 4H6M0.5 5.6H6" stroke="#6f8fb5" stroke-width="0.5"/></svg>
<svg class="a" style="left:222.5px;top:267.5px" width="6.5" height="5.5" viewBox="0 0 6.5 5.5"><rect x="0.5" y="0.5" width="5.5" height="4.5" fill="#e8eef5" stroke="#6f8fb5" stroke-width="0.5"/><rect x="1.5" y="2" width="2" height="2" fill="#4a7fc0"/></svg>
<svg class="a" style="left:236.5px;top:265.8px" width="7" height="8.5" viewBox="0 0 7 8.5"><rect x="0.5" y="0.5" width="6" height="7.5" fill="#f6c028"/><rect x="3.5" y="2" width="1.2" height="5" fill="#7a4fa0"/></svg>
<div class="a t l" style="left:259px;top:267.30px;line-height:8px;font-size:5.6px;color:#444;">文件: 59, 文件夹: 1, 压缩文件大小: 26.1 GB</div>
</div>
<div class="a" style="left:335.8px;top:183.8px;width:260.99999999999994px;height:122.69999999999999px;background:#f3f3f3;border-radius:4px;box-shadow:0 3px 14px rgba(0,0,0,0.26),0 0 1px rgba(0,0,0,0.3)"></div>
<svg class="a" style="left:339.8px;top:186.8px" width="7.2" height="7.2" viewBox="0 0 7.2 7.2"><circle cx="3.6" cy="3.6" r="3.3" fill="#1a6fd0"/><path d="M4.5 2L2.8 3.6L4.5 5.2" fill="none" stroke="#fff" stroke-width="0.9"/></svg>
<div class="a t l" style="left:348.6px;top:187.40px;line-height:8px;font-size:5.9px;color:#8a8a8a;">已解压</div>
<div class="a" style="left:562.5px;top:187.8px;width:0.7px;height:4.6px;background:#d6d6d6"></div>
<div class="a" style="left:565.5px;top:187.8px;width:0.7px;height:4.6px;background:#d6d6d6"></div>
<svg class="a" style="left:583.8px;top:187.6px" width="5.5" height="5.5" viewBox="0 0 5.5 5.5"><path d="M0.5 0.5L5 5M5 0.5L0.5 5" stroke="#777" stroke-width="0.5"/></svg>
<div class="a t l" style="left:341.1px;top:205.60px;line-height:8px;font-size:5.9px;color:#333;">0%</div>
<div class="a t l" style="left:341.1px;top:236.20px;line-height:8px;font-size:5.9px;color:#333;">0%</div>
<div class="a t l" style="right:207.70000000000005px;top:205.60px;line-height:8px;font-size:5.9px;color:#333;text-align:right;letter-spacing:0.3px">00:00:00 / 00:00:00</div>
<div class="a t l" style="right:207.70000000000005px;top:236.20px;line-height:8px;font-size:5.9px;color:#333;text-align:right;letter-spacing:0.3px">00:00:00 / 00:00:00</div>
<div class="a" style="left:341.1px;top:215.1px;width:252px;height:14.4px;background:#e6e6e6;border:0.5px solid #d8d8d8;box-sizing:border-box"></div>
<div class="a" style="left:341.1px;top:245.1px;width:252px;height:14.5px;background:#e6e6e6;border:0.5px solid #d8d8d8;box-sizing:border-box"></div>
<div class="a t l" style="left:341.1px;top:266.80px;line-height:8px;font-size:5.9px;color:#333;">户外\-魅心宿营地帐篷内.mp4</div>
<svg class="a" style="left:343.5px;top:290px" width="10.5" height="12.8" viewBox="0 0 10.5 12.8"><path d="M0.3 0.6H7.8V10.8H0.3Z" fill="#f7cc10"/><path d="M6.6 1.2H9.6V11.6H2" fill="none" stroke="#f0c830" stroke-width="0.9"/><rect x="6.4" y="2.2" width="1.8" height="7.8" fill="#6a6a6a"/><path d="M0.3 10.8L4 12.6V11" fill="#e0b000"/></svg>
<svg class="a" style="left:359.6px;top:290px" width="10.5" height="12.8" viewBox="0 0 10.5 12.8"><path d="M0.3 0.6H7.8V10.8H0.3Z" fill="#f7cc10"/><path d="M6.6 1.2H9.6V11.6H2" fill="none" stroke="#f0c830" stroke-width="0.9"/><rect x="6.4" y="2.2" width="1.8" height="7.8" fill="#f4f4f4"/><path d="M0.3 10.8L4 12.6V11" fill="#e0b000"/></svg>
<div class="a" style="left:540px;top:289px;width:44.2px;height:14px;background:#fbfbfb;border:0.5px solid #e3e3e3;border-radius:1px;box-sizing:border-box"></div>
<div class="a t l" style="left:551.10px;top:292.80px;width:30px;line-height:8px;font-size:5.9px;color:#222;text-align:center;">停止</div>
<div class="a" style="left:377px;top:164.5px;width:178.5px;height:165.0px;background:#f3f3f3;border-radius:4px;box-shadow:0 4px 16px rgba(0,0,0,0.32),0 0 1px rgba(0,0,0,0.35)"></div>
<svg class="a" style="left:380px;top:167.6px" width="6.8" height="6.8" viewBox="0 0 6.8 6.8"><circle cx="3.4" cy="3.4" r="3.2" fill="#1a6fd0"/><path d="M3.4 1.6C2.6 2.8 2.3 3.4 2.3 4A1.1 1.1 0 0 0 4.5 4C4.5 3.4 4.2 2.8 3.4 1.6Z" fill="#fff"/></svg>
<div class="a t l" style="left:388.7px;top:168.20px;line-height:8px;font-size:5.9px;color:#222;">输入密码</div>
<svg class="a" style="left:545.2px;top:168.4px" width="5.6" height="5.6" viewBox="0 0 5.6 5.6"><path d="M0.5 0.5L5.1 5.1M5.1 0.5L0.5 5.1" stroke="#333" stroke-width="0.6"/></svg>
<div class="a t l" style="left:381px;top:183.70px;line-height:8px;font-size:5.9px;color:#222;">密码错误，请重试。</div>
<div class="a t l" style="left:381px;top:207.00px;line-height:8px;font-size:5.9px;color:#222;">户外\-魅心宿营地帐篷内.mp4</div>
<div class="a" style="left:381px;top:218px;width:171px;height:0.6px;background:#dcdcdc"></div>
<div class="a t l" style="left:381px;top:224.50px;line-height:8px;font-size:5.9px;color:#222;">输入密码</div>
<div class="a" style="left:381px;top:236.2px;width:169.5px;height:10.6px;background:#fff;border:0.5px solid #a9c2de;border-bottom:0.7px solid #7ea6d6;border-radius:1px;box-sizing:border-box"></div>
<div class="a t l" style="left:383px;top:238.50px;line-height:8px;font-size:5.9px;color:#111;">上老王论坛当老王</div>
<svg class="a" style="left:544.5px;top:240.2px" width="3" height="2" viewBox="0 0 3 2"><path d="M0.4 0.5L1.5 1.5L2.6 0.5" fill="none" stroke="#666" stroke-width="0.5"/></svg>
<div class="a" style="left:381.7px;top:287.4px;width:5.8px;height:5.8px;background:#1a62c8;border-radius:1.2px"></div>
<svg class="a" style="left:381.7px;top:287.4px" width="5.8" height="5.8" viewBox="0 0 5.8 5.8"><path d="M1.4 2.9L2.5 4L4.4 1.9" fill="none" stroke="#fff" stroke-width="0.6"/></svg>
<div class="a t l" style="left:389.5px;top:287.20px;line-height:8px;font-size:5.9px;color:#222;">显示密码</div>
<div class="a" style="left:382px;top:313px;width:82px;height:11.5px;background:#fdfdfd;border:0.5px solid #e2e2e2;border-radius:2px;box-sizing:border-box"></div>
<div class="a t l" style="left:388.00px;top:315.80px;width:70px;line-height:8px;font-size:5.9px;color:#222;text-align:center;">密码管理器...</div>
<div class="a" style="left:478px;top:313px;width:33px;height:11.5px;background:#fdfdfd;border:0.6px solid #8fb3dd;border-radius:2px;box-sizing:border-box"></div>
<div class="a t l" style="left:479.50px;top:315.80px;width:30px;line-height:8px;font-size:5.9px;color:#222;text-align:center;">确定</div>
<div class="a" style="left:516.7px;top:313px;width:32px;height:11.5px;background:#fdfdfd;border:0.5px solid #e2e2e2;border-radius:2px;box-sizing:border-box"></div>
<div class="a t l" style="left:517.70px;top:315.80px;width:30px;line-height:8px;font-size:5.9px;color:#222;text-align:center;">取消</div>
</div></body></html>
